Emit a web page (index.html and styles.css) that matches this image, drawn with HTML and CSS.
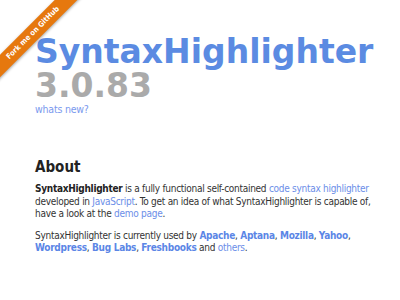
FILE: index.html
```html
<!DOCTYPE html>
<html>
<head>
<meta charset="utf-8">
<link rel="stylesheet" href="styles.css">
</head>
<body>
<div class="ribbon-wrap"><a class="ribbon" href="#">Fork me on GitHub</a></div>
<div class="page">
  <header class="head">
    <h1 class="title">SyntaxHighlighter</h1>
    <div class="version">3.0.83</div>
    <a class="news" href="#">whats new?</a>
  </header>
  <section class="about">
    <h2 class="about-title">About</h2>
    <p class="para"><b>SyntaxHighlighter</b> is a fully functional self-contained <a href="#" class="link">code syntax highlighter</a> developed in <a href="#" class="link">JavaScript</a>. To get an idea of what SyntaxHighlighter is capable of, have a look at the <a href="#" class="link">demo page</a>.</p>
    <p class="para">SyntaxHighlighter is currently used by <a href="#" class="blink">Apache</a>, <a href="#" class="blink">Aptana</a>, <a href="#" class="blink">Mozilla</a>, <a href="#" class="blink">Yahoo</a>, <a href="#" class="blink">Wordpress</a>, <a href="#" class="blink">Bug Labs</a>, <a href="#" class="blink">Freshbooks</a> and <a href="#" class="link">others</a>.</p>
  </section>
</div>
</body>
</html>
```
FILE: styles.css
```css
html, body { margin: 0; padding: 0; background: #fff; }
body { font-family: "DejaVu Sans Condensed", "DejaVu Sans", Verdana, sans-serif; color: #333; }
.page { padding: 35px 0 0 35px; width: 342px; }
.head { display: flex; flex-direction: column; align-items: flex-start; }
.title { margin: 0; font-family: "DejaVu Sans", Verdana, sans-serif; font-size: 33px; line-height: 34px; font-weight: bold; color: #5b8be2; }
.version { font-family: "DejaVu Sans", Verdana, sans-serif; font-size: 33px; line-height: 33px; font-weight: bold; color: #aaaaaa; }
.news { font-size: 10.5px; line-height: 14px; color: #7a99ee; text-decoration: none; letter-spacing: -0.2px; }
.about { margin-top: 42px; }
.about-title { margin: 0 0 7px; font-size: 15px; line-height: 18px; font-weight: bold; color: #222; }
.para { margin: 0 0 9px; font-size: 10px; line-height: 12.5px; color: #333; letter-spacing: -0.28px; }
.para b { color: #222; }
.link { color: #6b8ee8; text-decoration: none; }
.blink { color: #5b86e6; text-decoration: none; font-weight: bold; }
.ribbon-wrap { position: absolute; top: 0; left: 0; width: 100px; height: 100px; overflow: hidden; }
.ribbon { position: absolute; left: -47px; top: 25px; width: 160px; height: 16px; line-height: 16px; transform: rotate(-45deg); background: #e6780e; color: #fff; font-size: 7.5px; font-weight: bold; text-align: center; text-decoration: none; box-shadow: 0 1px 3px rgba(0,0,0,0.35); }
```
